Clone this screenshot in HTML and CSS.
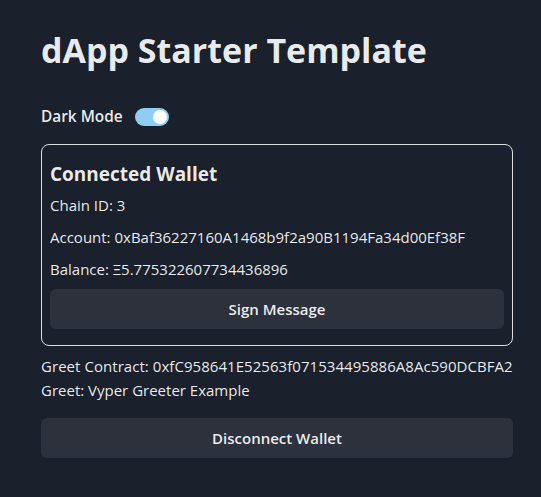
FILE: index.html
```html
<!DOCTYPE html>
<html>
<head>
<meta charset="utf-8">
<link rel="stylesheet" href="styles.css">
</head>
<body>
<main class="page">
  <h1 class="title">dApp Starter Template</h1>
  <div class="mode-row">
    <span class="mode-label">Dark Mode</span>
    <span class="switch"><span class="thumb"></span></span>
  </div>
  <section class="card">
    <h2 class="card-title">Connected Wallet</h2>
    <p class="line">Chain ID: 3</p>
    <p class="line">Account: 0xBaf36227160A1468b9f2a90B1194Fa34d00Ef38F</p>
    <p class="line">Balance: Ξ5.775322607734436896</p>
    <button class="btn">Sign Message</button>
  </section>
  <div class="greet">
    <p class="greet-line">Greet Contract: 0xfC958641E52563f071534495886A8Ac590DCBFA2</p>
    <p class="greet-line">Greet: Vyper Greeter Example</p>
  </div>
  <button class="btn wide">Disconnect Wallet</button>
</main>
</body>
</html>
```
FILE: styles.css
```css
html, body {
  margin: 0;
  padding: 0;
  background: #1a202c;
}
body {
  font-family: "Open Sans", "Noto Sans", sans-serif;
  color: rgba(255, 255, 255, 0.92);
  width: 541px;
  height: 497px;
  overflow: hidden;
}
.page {
  width: 472px;
  margin: 0 0 0 41px;
  padding-top: 29px;
  display: flex;
  flex-direction: column;
}
.title {
  margin: 0;
  font-size: 34px;
  line-height: 43px;
  font-weight: 700;
}
.mode-row {
  display: flex;
  align-items: center;
  gap: 12px;
  margin-top: 35px;
  height: 20px;
}
.mode-label {
  font-size: 15.4px;
  line-height: 20px;
  font-weight: 600;
}
.switch {
  width: 34px;
  height: 18px;
  border-radius: 9px;
  background: #90cdf4;
  display: flex;
  align-items: center;
  justify-content: flex-end;
  padding: 0 2px;
  box-sizing: border-box;
}
.thumb {
  width: 14px;
  height: 14px;
  border-radius: 50%;
  background: #fff;
}
.card {
  margin-top: 17px;
  border: 1px solid rgba(255, 255, 255, 0.85);
  border-radius: 8px;
  padding: 14px 8px 16px 8px;
  display: flex;
  flex-direction: column;
}
.card-title {
  margin: 0;
  font-size: 19px;
  line-height: 30px;
  font-weight: 700;
}
.line {
  margin: 4px 0 0 0;
  font-size: 15px;
  line-height: 28px;
}
.card-title + .line {
  margin-top: 2px;
}
.btn {
  font-family: inherit;
  color: rgba(255, 255, 255, 0.92);
  background: #2d313b;
  border: none;
  border-radius: 6px;
  height: 40px;
  font-size: 15px;
  font-weight: 600;
  margin-top: 6px;
}
.greet {
  margin-top: 8px;
}
.greet-line {
  margin: 0;
  font-size: 15px;
  line-height: 24px;
  white-space: nowrap;
}
.greet-line:first-child {
  letter-spacing: 0.05px;
}
.wide {
  margin-top: 16px;
  width: 100%;
}
```
